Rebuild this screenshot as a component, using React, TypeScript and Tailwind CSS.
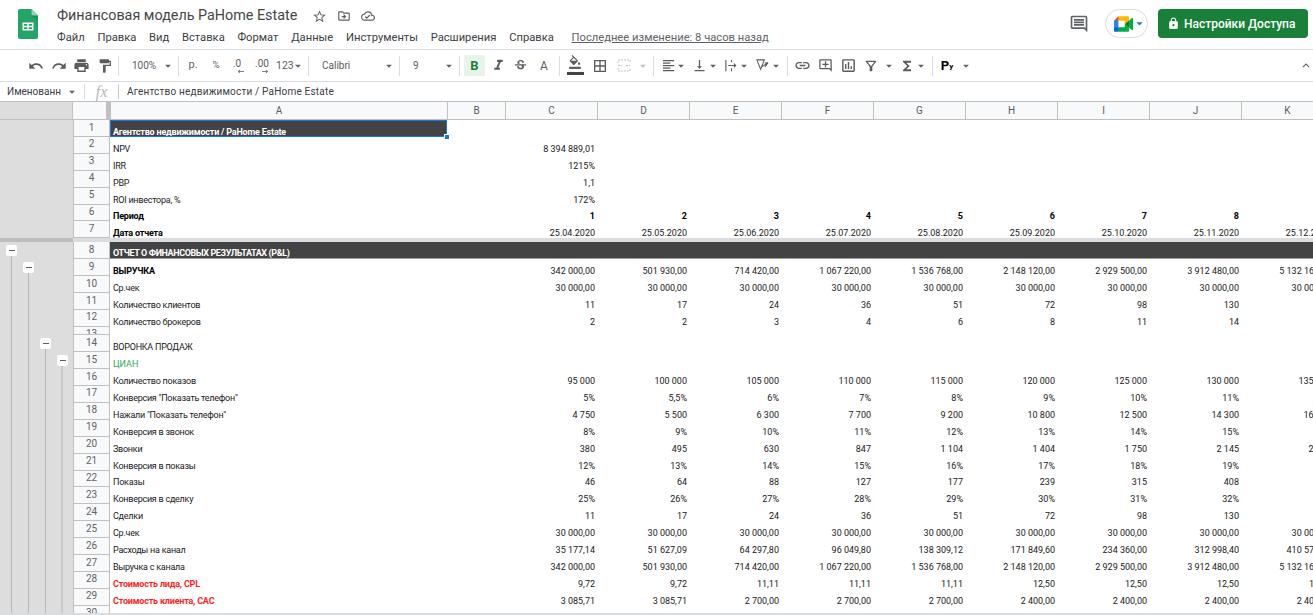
import type { ReactNode } from "react";
import {
  MdArrowDropDown,
  MdBorderAll,
  MdFormatAlignLeft,
  MdFormatColorFill,
  MdFormatItalic,
  MdFormatPaint,
  MdFunctions,
  MdKeyboardArrowUp,
  MdLink,
  MdLock,
  MdOutlineAddComment,
  MdOutlineCloudDone,
  MdOutlineDriveFileMove,
  MdOutlineFilterAlt,
  MdOutlineInsertChart,
  MdOutlineInsertComment,
  MdPrint,
  MdRedo,
  MdStarBorder,
  MdStrikethroughS,
  MdUndo,
  MdVerticalAlignBottom,
} from "react-icons/md";

type RowData = {
  n: number;
  label?: string;
  values?: string[];
  tone?: "bold" | "boldLabel" | "green" | "red" | "dark" | "title";
  short?: boolean;
};

const MENU = ["Файл", "Правка", "Вид", "Вставка", "Формат", "Данные", "Инструменты", "Расширения", "Справка"];
const COLUMNS = ["A", "B", "C", "D", "E", "F", "G", "H", "I", "J", "K"];

const CHECK = ["30 000,00", "30 000,00", "30 000,00", "30 000,00", "30 000,00", "30 000,00", "30 000,00", "30 000,00", "30 000,00"];
const REVENUE = ["342 000,00", "501 930,00", "714 420,00", "1 067 220,00", "1 536 768,00", "2 148 120,00", "2 929 500,00", "3 912 480,00", "5 132 160,00"];
const DEALS = ["11", "17", "24", "36", "51", "72", "98", "130", "171"];

const FROZEN: RowData[] = [
  { n: 1, label: "Агентство недвижимости / PaHome Estate", tone: "title" },
  { n: 2, label: "NPV", values: ["8 394 889,01"] },
  { n: 3, label: "IRR", values: ["1215%"] },
  { n: 4, label: "PBP", values: ["1,1"] },
  { n: 5, label: "ROI инвестора, %", values: ["172%"] },
  { n: 6, label: "Период", tone: "bold", values: ["1", "2", "3", "4", "5", "6", "7", "8", "9"] },
  {
    n: 7,
    label: "Дата отчета",
    tone: "boldLabel",
    values: ["25.04.2020", "25.05.2020", "25.06.2020", "25.07.2020", "25.08.2020", "25.09.2020", "25.10.2020", "25.11.2020", "25.12.2020"],
  },
];

const ROWS: RowData[] = [
  { n: 8, label: "ОТЧЕТ О ФИНАНСОВЫХ РЕЗУЛЬТАТАХ (P&L)", tone: "dark" },
  { n: 9, label: "ВЫРУЧКА", tone: "boldLabel", values: REVENUE },
  { n: 10, label: "Ср.чек", values: CHECK },
  { n: 11, label: "Количество клиентов", values: DEALS },
  { n: 12, label: "Количество брокеров", values: ["2", "2", "3", "4", "6", "8", "11", "14", "18"] },
  { n: 13, short: true },
  { n: 14, label: "ВОРОНКА ПРОДАЖ" },
  { n: 15, label: "ЦИАН", tone: "green" },
  { n: 16, label: "Количество показов", values: ["95 000", "100 000", "105 000", "110 000", "115 000", "120 000", "125 000", "130 000", "135 000"] },
  { n: 17, label: 'Конверсия "Показать телефон"', values: ["5%", "5,5%", "6%", "7%", "8%", "9%", "10%", "11%", "12%"] },
  { n: 18, label: 'Нажали "Показать телефон"', values: ["4 750", "5 500", "6 300", "7 700", "9 200", "10 800", "12 500", "14 300", "16 200"] },
  { n: 19, label: "Конверсия в звонок", values: ["8%", "9%", "10%", "11%", "12%", "13%", "14%", "15%", "16%"] },
  { n: 20, label: "Звонки", values: ["380", "495", "630", "847", "1 104", "1 404", "1 750", "2 145", "2 592"] },
  { n: 21, label: "Конверсия в показы", values: ["12%", "13%", "14%", "15%", "16%", "17%", "18%", "19%", "20%"] },
  { n: 22, label: "Показы", values: ["46", "64", "88", "127", "177", "239", "315", "408", "518"] },
  { n: 23, label: "Конверсия в сделку", values: ["25%", "26%", "27%", "28%", "29%", "30%", "31%", "32%", "33%"] },
  { n: 24, label: "Сделки", values: DEALS },
  { n: 25, label: "Ср.чек", values: CHECK },
  { n: 26, label: "Расходы на канал", values: ["35 177,14", "51 627,09", "64 297,80", "96 049,80", "138 309,12", "171 849,60", "234 360,00", "312 998,40", "410 572,80"] },
  { n: 27, label: "Выручка с канала", values: REVENUE },
  { n: 28, label: "Стоимость лида, CPL", tone: "red", values: ["9,72", "9,72", "11,11", "11,11", "11,11", "12,50", "12,50", "12,50", "12,50"] },
  { n: 29, label: "Стоимость клиента, CAC", tone: "red", values: ["3 085,71", "3 085,71", "2 700,00", "2 700,00", "2 700,00", "2 400,00", "2 400,00", "2 400,00", "2 400,00"] },
  { n: 30 },
];

function SheetsLogo() {
  return (
    <svg viewBox="0 0 20 30" className="h-[30px] w-[20px] shrink-0">
      <path d="M2 0h11.5L20 6.5V28a2 2 0 0 1-2 2H2a2 2 0 0 1-2-2V2a2 2 0 0 1 2-2z" fill="#23a566" />
      <path d="M13.5 0L20 6.5h-4.8a1.7 1.7 0 0 1-1.7-1.7z" fill="#8ed1b1" />
      <path d="M13.5 6.5L20 12V6.5z" fill="#188038" opacity="0.5" />
      <path d="M4.5 13.5h11v8h-11zM6 15v1.8h3.3V15zm4.7 0v1.8H14V15zM6 18.2V20h3.3v-1.8zm4.7 0V20H14v-1.8z" fill="#fff" fillRule="evenodd" />
    </svg>
  );
}

function MeetLogo() {
  return (
    <svg viewBox="0 0 87.5 72" className="h-[16px] w-[19px]">
      <path fill="#00832d" d="M49.5 36l8.53 9.75 11.47 7.33 2-17.02-2-16.64-11.69 6.44z" />
      <path fill="#0066da" d="M0 51.5V66c0 3.315 2.685 6 6 6h14.5l3-10.96-3-9.54-9.95-3z" />
      <path fill="#e94235" d="M20.5 0L0 20.5l10.55 3 9.95-3 2.95-9.41z" />
      <path fill="#2684fc" d="M20.5 20.5H0v31h20.5z" />
      <path fill="#00ac47" d="M82.6 8.68L69.5 19.42v33.66l13.16 10.79c1.97 1.54 4.85.135 4.85-2.37V11c0-2.535-2.945-3.925-4.91-2.32zM49.5 36v15.5h-29V72h43c3.315 0 6-2.685 6-6V53.08z" />
      <path fill="#ffba00" d="M63.5 0h-43v20.5h29V36l20-16.57V6c0-3.315-2.685-6-6-6z" />
    </svg>
  );
}

function Header() {
  return (
    <header className="flex h-[50px] shrink-0 items-start border-b border-[#dadce0] pl-[18px] pt-[9px]">
      <SheetsLogo />
      <div className="ml-[19px] min-w-0">
        <div className="flex h-[14px] items-center text-[#444746]">
          <span className="text-[14.35px] leading-[14px] whitespace-nowrap">Финансовая модель PaHome Estate</span>
          <MdStarBorder className="ml-[15px] text-[15px] text-[#5f6368]" />
          <MdOutlineDriveFileMove className="ml-[10px] text-[14px] text-[#5f6368]" />
          <MdOutlineCloudDone className="ml-[10px] text-[14px] text-[#5f6368]" />
        </div>
        <nav className="mt-[7px] flex h-[16px] items-center gap-[12.75px] text-[11.2px] leading-[16px] whitespace-nowrap text-[#3c4043]">
          {MENU.map((item) => (
            <span key={item}>{item}</span>
          ))}
          <span className="ml-[5px] text-[#5f6368] underline">Последнее изменение: 8 часов назад</span>
        </nav>
      </div>
      <div className="ml-auto flex items-center pr-[5px]">
        <MdOutlineInsertComment className="text-[20px] text-[#5f6368]" />
        <div className="ml-[16px] flex h-[29px] w-[43px] items-center rounded-full border border-[#dadce0] pl-[8px]">
          <MeetLogo />
          <MdArrowDropDown className="-ml-[1px] text-[15px] text-[#1a73e8]" />
        </div>
        <button className="ml-[10px] flex h-[29px] w-[150px] items-center gap-[4px] rounded bg-[#188038] pl-[9px] text-[12px] font-medium text-white">
          <MdLock className="text-[13px]" />
          Настройки Доступа
        </button>
      </div>
    </header>
  );
}

function Sep() {
  return <span className="h-[20px] w-px shrink-0 bg-[#dadce0]" />;
}

function Caret({ className = "" }: { className?: string }) {
  return (
    <span className={`flex w-[10px] shrink-0 justify-center ${className}`}>
      <MdArrowDropDown className="shrink-0 text-[14px] text-[#5f6368]" />
    </span>
  );
}

function Tool({ className = "", children }: { className?: string; children: ReactNode }) {
  return <span className={`flex shrink-0 items-center justify-center text-[#5a5c5e] ${className}`}>{children}</span>;
}

function DecimalIcon({ label, right }: { label: string; right?: boolean }) {
  return (
    <span className="relative -mt-[3px] text-[10px] leading-[10px]">
      {label}
      <svg viewBox="0 0 9 5" className={`absolute top-[10px] h-[5px] w-[7px] ${right ? "right-0" : "right-[-3px]"}`}>
        {right ? (
          <path d="M0 2.5h7M5 .5l2.5 2-2.5 2" stroke="#5a5c5e" fill="none" />
        ) : (
          <path d="M9 2.5H2M4 .5l-2.5 2 2.5 2" stroke="#5a5c5e" fill="none" />
        )}
      </svg>
    </span>
  );
}

function Toolbar() {
  return (
    <div className="flex h-[32px] shrink-0 items-center border-b border-[#dadce0] pl-[24px] text-[10px] text-[#5a5c5e]">
      <Tool className="w-[23px] text-[16px]"><MdUndo /></Tool>
      <Tool className="w-[23px] text-[16px]"><MdRedo /></Tool>
      <Tool className="w-[23px] text-[17px]"><MdPrint /></Tool>
      <Tool className="w-[23px] text-[16px]"><MdFormatPaint /></Tool>
      <span className="ml-[2px]" />
      <Sep />
      <span className="flex w-[59px] shrink-0 items-center justify-between pl-[13px] pr-[5px]">
        100%
        <Caret />
      </span>
      <Sep />
      <Tool className="w-[28px] text-[11px] text-[#6b5a66]">р.</Tool>
      <Tool className="w-[18px] text-[9.6px]">%</Tool>
      <Tool className="w-[24px]"><DecimalIcon label=".0" /></Tool>
      <Tool className="w-[26px]"><DecimalIcon label=".00" right /></Tool>
      <span className="flex w-[33px] shrink-0 items-center pl-[1px] text-[10.5px]">
        123
        <Caret className="-ml-[1px]" />
      </span>
      <Sep />
      <span className="flex w-[90px] shrink-0 items-center justify-between pl-[13px] pr-[5px]">
        Calibri
        <Caret />
      </span>
      <Sep />
      <span className="flex w-[59px] shrink-0 items-center justify-between pl-[13px] pr-[5px]">
        9
        <Caret />
      </span>
      <Sep />
      <span className="ml-[4px] flex h-[21px] w-[21px] shrink-0 items-center justify-center rounded-[2px] bg-[#e6f4ea] text-[13px] font-bold text-[#188038]">
        B
      </span>
      <Tool className="w-[26px] text-[17px]"><MdFormatItalic /></Tool>
      <Tool className="w-[18px] text-[15px]"><MdStrikethroughS /></Tool>
      <Tool className="w-[30px] text-[12px]">A</Tool>
      <Sep />
      <Tool className="relative h-[24px] w-[30px] items-start text-[14px]">
        <MdFormatColorFill className="mt-[1px]" />
        <span className="absolute left-[7px] top-[18px] h-[3px] w-[17px] bg-[#434343]" />
      </Tool>
      <Tool className="w-[20px] text-[16px]"><MdBorderAll /></Tool>
      <Tool className="w-[28px]">
        <svg viewBox="0 0 14 13" className="h-[13px] w-[14px]" fill="none" stroke="#c4c6c8">
          <path d="M1 4V1h12v3M1 9v3h12V9M1 6.5h4M9 6.5h4" strokeDasharray="2 1" />
        </svg>
      </Tool>
      <Caret className="opacity-40" />
      <span className="ml-[5px]" />
      <Sep />
      <Tool className="ml-[6px] w-[16px] text-[15px]"><MdFormatAlignLeft /></Tool>
      <Caret />
      <Tool className="ml-[5px] w-[16px] text-[15px]"><MdVerticalAlignBottom /></Tool>
      <Caret className="ml-[1px]" />
      <Tool className="ml-[5px] w-[16px]">
        <svg viewBox="0 0 16 16" className="h-[15px] w-[15px]" fill="none" stroke="#5a5c5e" strokeWidth="1.2">
          <path d="M2 2v12" />
          <path d="M8 2v2.5M8 11v3M4.5 8h8M10.5 6l2 2-2 2" />
        </svg>
      </Tool>
      <Caret />
      <Tool className="ml-[5px] w-[16px]">
        <svg viewBox="0 0 16 16" className="h-[15px] w-[15px]" fill="none" stroke="#5a5c5e" strokeWidth="1.1">
          <path d="M2 2h8L6 12zM7 9.5l7-4.5M10.5 9.5L14 5M14 5l-3.5.3" />
        </svg>
      </Tool>
      <Caret className="ml-[1px]" />
      <span className="ml-[6px]" />
      <Sep />
      <Tool className="ml-[4px] w-[20px] text-[17px]"><MdLink /></Tool>
      <Tool className="ml-[3px] w-[20px] text-[15px]"><MdOutlineAddComment /></Tool>
      <Tool className="ml-[3px] w-[20px] text-[17px]"><MdOutlineInsertChart /></Tool>
      <Tool className="ml-[3px] w-[20px] text-[16px]"><MdOutlineFilterAlt /></Tool>
      <Caret className="ml-[3px]" />
      <Tool className="ml-[5px] w-[16px] text-[16px]"><MdFunctions /></Tool>
      <Caret className="ml-[1px]" />
      <span className="ml-[6px]" />
      <Sep />
      <span className="ml-[4px] flex w-[20px] shrink-0 items-start justify-center text-[13px] font-bold leading-[13px] text-black">
        P<span className="mt-[3px] text-[8px] leading-[10px]">y</span>
      </span>
      <Caret className="ml-[4px]" />
      <Tool className="ml-auto w-[14px] text-[15px]"><MdKeyboardArrowUp /></Tool>
    </div>
  );
}

function FormulaBar() {
  return (
    <div className="flex h-[19px] shrink-0 items-center text-[10px] text-[#3c4043]">
      <div className="flex w-[84px] shrink-0 items-center pl-[7px] pr-[5px]">
        <span className="whitespace-nowrap">Именованн</span>
        <MdArrowDropDown className="ml-auto text-[14px] text-[#5f6368]" />
      </div>
      <span className="h-[15px] w-px bg-[#dadce0]" />
      <span className="w-[33px] text-center text-[16px] italic leading-[18px] text-[#b4b6b8]" style={{ fontFamily: '"Liberation Serif", serif' }}>
        fx
      </span>
      <span className="h-[15px] w-px bg-[#c8c8c8]" />
      <span className="ml-[8px] whitespace-nowrap tracking-[0.2px]">Агентство недвижимости / PaHome Estate</span>
    </div>
  );
}

function ColumnHeaders() {
  return (
    <div className="flex h-[19px] shrink-0 border-y border-[#c0c0c0] bg-[#f8f9fa] text-[10px] text-[#5a5c5e]">
      <div className="w-[73px] shrink-0 border-r border-[#c0c0c0] bg-[#dddddd]" />
      <div className="w-[33px] shrink-0" />
      <div className="w-[4px] shrink-0 bg-[#c0c0c0]" />
      <div className="grid grid-cols-[337px_58px_repeat(9,92px)]">
        {COLUMNS.map((col) => (
          <div key={col} className="flex items-center justify-center border-l border-[#c0c0c0]">
            {col}
          </div>
        ))}
      </div>
    </div>
  );
}

function labelClass(tone: RowData["tone"]) {
  if (tone === "bold" || tone === "boldLabel") return "font-bold text-black tracking-[-0.2px]";
  if (tone === "title") return "font-bold text-white tracking-[-0.2px]";
  if (tone === "dark") return "font-bold text-white tracking-[-0.4px]";
  if (tone === "green") return "text-[#34a853]";
  if (tone === "red") return "font-bold text-[#ff1f1f] tracking-[-0.2px]";
  return "text-[#1a1a1a] tracking-[-0.25px]";
}

function Row({ row }: { row: RowData }) {
  const isDark = row.tone === "dark";
  return (
    <div className={`flex shrink-0 ${row.short ? "h-[8.4px]" : "h-[16.92px]"}`}>
      <div
        className={`flex w-[37px] shrink-0 justify-center overflow-hidden border-x border-b border-[#c0c0c0] bg-[#f8f9fa] text-[10px] leading-[12px] text-[#5f6368] ${
          row.short ? "items-start pt-[1px]" : "items-start pt-[1.5px]"
        }`}
      >
        {row.n}
      </div>
      <div className={`grid grid-cols-[337px_58px_repeat(9,92px)] ${isDark ? "border-b border-[#9e9e9e] bg-[#434343]" : ""}`}>
        <div
          className={`relative flex items-end whitespace-nowrap pl-[3px] leading-[9px] ${labelClass(row.tone)} ${
            row.tone === "title" ? "bg-[#434343] outline-[1.5px] outline-offset-[-1px] outline-[#1a73e8]" : ""
          }`}
        >
          {row.label}
          {row.tone === "title" && (
            <span className="absolute -bottom-[3px] -right-[3px] h-[6px] w-[6px] border border-white bg-[#1a73e8]" />
          )}
        </div>
        <div />
        {row.values?.map((value, i) => (
          <div
            key={i}
            className={`flex items-end justify-end whitespace-nowrap pr-[2px] leading-[9px] ${
              row.tone === "bold" ? "font-bold text-black" : "text-[#1a1a1a]"
            }`}
          >
            {value}
          </div>
        ))}
      </div>
    </div>
  );
}

function GroupToggle({ className }: { className: string }) {
  return (
    <span className={`absolute flex h-[11px] w-[11px] items-center justify-center rounded-[2px] bg-white ${className}`}>
      <span className="h-px w-[6px] bg-[#5f6368]" />
    </span>
  );
}

export default function App() {
  return (
    <div className="flex h-[615px] w-[1313px] flex-col overflow-hidden bg-white" style={{ fontFamily: 'Roboto, "Liberation Sans", sans-serif' }}>
      <Header />
      <Toolbar />
      <FormulaBar />
      <ColumnHeaders />
      <div className="text-[9px]">
        <div className="flex">
          <div className="w-[73px] shrink-0 bg-[#dddddd]" />
          <div>
            {FROZEN.map((row) => (
              <Row key={row.n} row={row} />
            ))}
          </div>
        </div>
        <div className="flex h-[4px]">
          <div className="w-[73px] bg-[#bdbdbd]" />
          <div className="flex-1 bg-[#dadce0]" />
        </div>
        <div className="flex h-[370.5px] overflow-hidden">
          <div className="relative w-[73px] shrink-0 bg-[#dddddd]">
            <span className="absolute bottom-0 left-[11px] top-[10px] w-px bg-[#b5b5b5]" />
            <span className="absolute bottom-0 left-[28px] top-[27px] w-px bg-[#b5b5b5]" />
            <span className="absolute bottom-0 left-[45px] top-[102px] w-px bg-[#b5b5b5]" />
            <span className="absolute bottom-0 left-[61px] top-[119px] w-[2px] bg-[#c8c8c8]" />
            <GroupToggle className="left-[6px] top-[3px]" />
            <GroupToggle className="left-[23px] top-[20px]" />
            <GroupToggle className="left-[40px] top-[96px]" />
            <GroupToggle className="left-[57px] top-[113px]" />
          </div>
          <div>
            {ROWS.map((row) => (
              <Row key={row.n} row={row} />
            ))}
          </div>
        </div>
      </div>
      <div className="h-[2px] shrink-0 bg-[#dadce0]" />
    </div>
  );
}
